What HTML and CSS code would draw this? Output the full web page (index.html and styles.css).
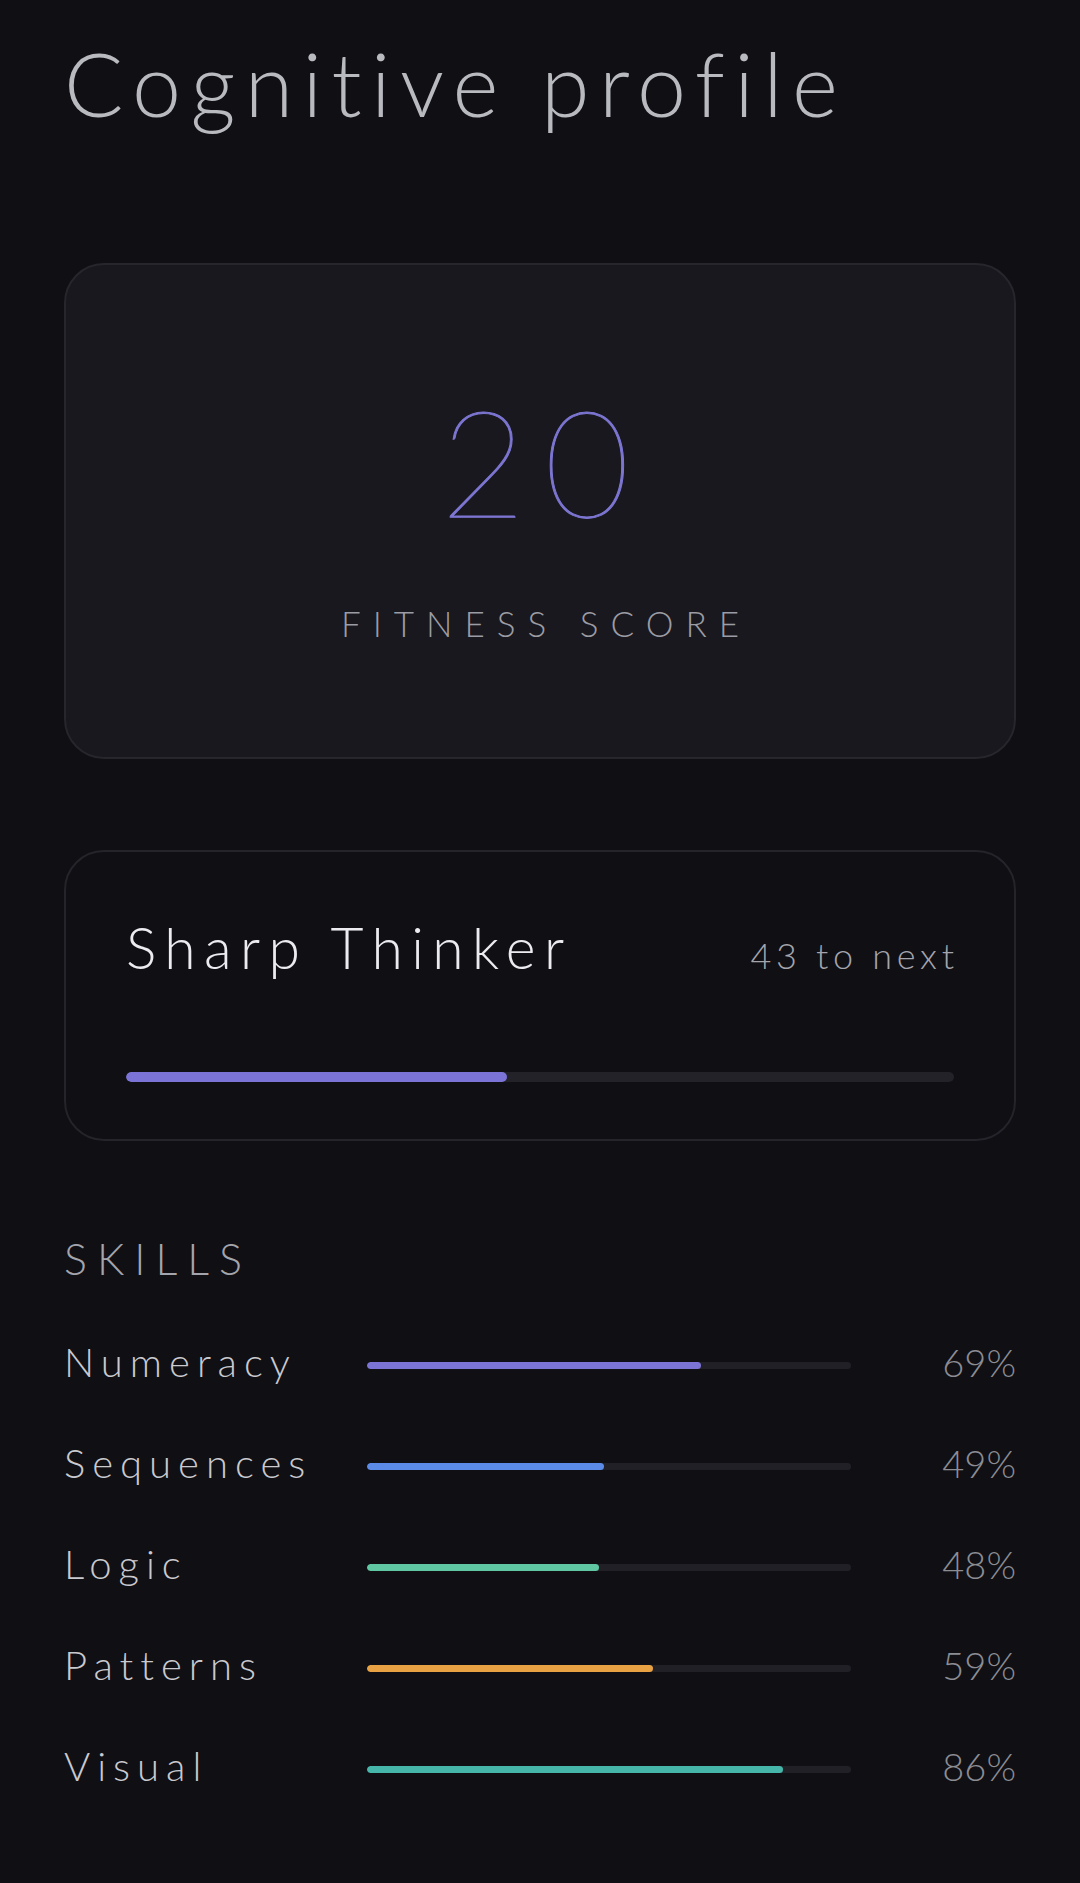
FILE: index.html
```html
<!DOCTYPE html>
<html lang="en">
<head>
<meta charset="utf-8">
<title>Cognitive profile</title>
<link rel="stylesheet" href="styles.css">
</head>
<body>
<main class="page">
  <h1 class="page-title">Cognitive profile</h1>

  <section class="score-card">
    <div class="score-value">20</div>
    <div class="score-label">FITNESS SCORE</div>
  </section>

  <section class="level-card">
    <div class="level-head">
      <span class="level-name">Sharp Thinker</span>
      <span class="level-next">43 to next</span>
    </div>
    <div class="level-track"><div class="level-fill" style="width: 46%"></div></div>
  </section>

  <section class="skills">
    <h2 class="skills-title">SKILLS</h2>
    <div class="skill-list">
      <div class="skill-row">
        <span class="skill-name">Numeracy</span>
        <div class="skill-track"><div class="skill-fill fill-purple" style="width: 69%"></div></div>
        <span class="skill-pct">69%</span>
      </div>
      <div class="skill-row">
        <span class="skill-name">Sequences</span>
        <div class="skill-track"><div class="skill-fill fill-blue" style="width: 49%"></div></div>
        <span class="skill-pct">49%</span>
      </div>
      <div class="skill-row">
        <span class="skill-name">Logic</span>
        <div class="skill-track"><div class="skill-fill fill-green" style="width: 48%"></div></div>
        <span class="skill-pct">48%</span>
      </div>
      <div class="skill-row">
        <span class="skill-name">Patterns</span>
        <div class="skill-track"><div class="skill-fill fill-orange" style="width: 59%"></div></div>
        <span class="skill-pct">59%</span>
      </div>
      <div class="skill-row">
        <span class="skill-name">Visual</span>
        <div class="skill-track"><div class="skill-fill fill-teal" style="width: 86%"></div></div>
        <span class="skill-pct">86%</span>
      </div>
    </div>
  </section>
</main>
</body>
</html>
```
FILE: styles.css
```css
* {
  box-sizing: border-box;
}

html,
body {
  margin: 0;
  padding: 0;
  background: #0f0f14;
}

body {
  font-family: "Lato", "Open Sans", "Liberation Sans", sans-serif;
  font-weight: 300;
  font-variant-ligatures: none;
  color: #e6e6ea;
  min-height: 1883px;
}

.page {
  padding: 33px 64px 0;
}

/* heading */
.page-title {
  margin: 0;
  font-size: 88px;
  line-height: 100px;
  font-weight: 300;
  letter-spacing: 9.4px;
  color: #b9b9c0;
}

/* fitness score card */
.score-card {
  margin-top: 130px;
  height: 496px;
  padding-top: 122px;
  background: #18181e;
  border: 2px solid #26262c;
  border-radius: 40px;
  display: flex;
  flex-direction: column;
  align-items: center;
}

.score-value {
  font-size: 148px;
  line-height: 148px;
  font-weight: 100;
  letter-spacing: 18px;
  padding-left: 8px;
  color: #7d76d2;
  -webkit-text-stroke: 1px #7d76d2;
}

.score-label {
  margin-top: 68px;
  font-size: 35px;
  line-height: 40px;
  letter-spacing: 12px;
  padding-left: 12px;
  color: #9c9ca4;
}

/* level card */
.level-card {
  margin-top: 91px;
  padding: 63px 60px 57px;
  border: 2px solid #24242a;
  border-radius: 40px;
}

.level-head {
  display: flex;
  justify-content: space-between;
  align-items: baseline;
}

.level-name {
  font-size: 57px;
  line-height: 64px;
  font-weight: 300;
  letter-spacing: 8.4px;
  color: #ececf0;
}

.level-next {
  font-size: 36px;
  letter-spacing: 4.7px;
  margin-right: -4.7px;
  color: #a4a4ac;
}

.level-track {
  margin-top: 93px;
  height: 10px;
  border-radius: 5px;
  background: #222228;
  overflow: hidden;
}

.level-fill {
  height: 100%;
  border-radius: 5px;
  background: #7b74d6;
}

/* skills */
.skills {
  margin-top: 93px;
}

.skills-title {
  margin: 0;
  font-size: 43px;
  line-height: 50px;
  font-weight: 300;
  letter-spacing: 10px;
  color: #a4a4ac;
}

.skill-list {
  margin-top: 54px;
  display: flex;
  flex-direction: column;
  gap: 53px;
}

.skill-row {
  display: grid;
  grid-template-columns: 303px 484px 1fr;
  align-items: center;
}

.skill-name {
  font-size: 40px;
  line-height: 48px;
  letter-spacing: 7px;
  color: #c9c9ce;
}

.skill-track {
  margin-top: 7px;
  height: 7px;
  border-radius: 4px;
  background: #202026;
  overflow: hidden;
}

.skill-fill {
  height: 100%;
  border-radius: 4px;
}

.fill-purple { background: #7c74d4; }
.fill-blue { background: #5b8be6; }
.fill-green { background: #5fc8a2; }
.fill-orange { background: #e8a244; }
.fill-teal { background: #47b6aa; }

.skill-pct {
  text-align: right;
  font-size: 38px;
  line-height: 48px;
  color: #8c8c93;
}
```
